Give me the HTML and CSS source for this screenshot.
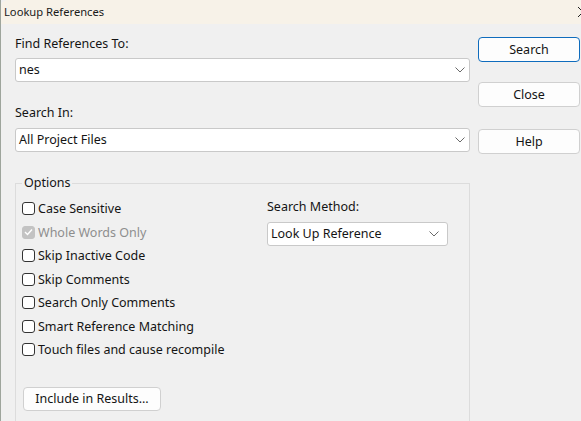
FILE: index.html
```html
<!DOCTYPE html>
<html lang="en">
<head>
<meta charset="utf-8">
<title>Lookup References</title>
<link rel="stylesheet" href="styles.css">
</head>
<body>
<div class="window">
  <div class="titlebar">
    <span class="title">Lookup References</span>
    <svg class="close-x" width="12" height="12" viewBox="0 0 12 12"><path d="M1 1 L11 11 M11 1 L1 11" stroke="#222" stroke-width="1" fill="none"/></svg>
  </div>
  <div class="body">
    <div class="main">
      <div class="lbl lbl-find">Find References To:</div>
      <div class="combo combo-find">
        <span class="combo-text">nes</span>
        <svg class="chev" width="10" height="6" viewBox="0 0 10 6"><path d="M0.5 0.5 L5 5 L9.5 0.5" stroke="#6a6a6a" stroke-width="1" fill="none"/></svg>
      </div>
      <div class="lbl lbl-in">Search In:</div>
      <div class="combo combo-in">
        <span class="combo-text">All Project Files</span>
        <svg class="chev" width="10" height="6" viewBox="0 0 10 6"><path d="M0.5 0.5 L5 5 L9.5 0.5" stroke="#6a6a6a" stroke-width="1" fill="none"/></svg>
      </div>

      <fieldset class="options">
        <legend>Options</legend>
        <div class="opt-cols">
          <ul class="checks">
            <li><span class="box"></span>Case Sensitive</li>
            <li class="disabled"><span class="box checked"><svg width="9" height="8" viewBox="0 0 9 8"><path d="M1 4 L3.5 6.5 L8 1.5" stroke="#fff" stroke-width="1.4" fill="none"/></svg></span>Whole Words Only</li>
            <li><span class="box"></span>Skip Inactive Code</li>
            <li><span class="box"></span>Skip Comments</li>
            <li><span class="box"></span>Search Only Comments</li>
            <li><span class="box"></span>Smart Reference Matching</li>
            <li><span class="box"></span>Touch files and cause recompile</li>
          </ul>
          <div class="method">
            <div class="lbl">Search Method:</div>
            <div class="combo combo-method">
              <span class="combo-text">Look Up Reference</span>
              <svg class="chev" width="10" height="6" viewBox="0 0 10 6"><path d="M0.5 0.5 L5 5 L9.5 0.5" stroke="#6a6a6a" stroke-width="1" fill="none"/></svg>
            </div>
          </div>
        </div>
        <button class="btn btn-include">Include in Results...</button>
      </fieldset>
    </div>

    <div class="side">
      <button class="btn btn-side btn-default">Search</button>
      <button class="btn btn-side btn-close">Close</button>
      <button class="btn btn-side btn-help">Help</button>
    </div>
  </div>
</div>
</body>
</html>
```

FILE: styles.css
```css
* { box-sizing: border-box; }

html, body {
  margin: 0;
  padding: 0;
  width: 581px;
  height: 421px;
  overflow: hidden;
  background: #f0f0f0;
}

body {
  font-family: "Noto Sans", "Liberation Sans", sans-serif;
  font-size: 12.5px;
  color: #141414;
}

.window {
  height: 421px;
  border-left: 1px solid #9ea59c;
  background: #f0f0f0;
}

/* caption bar */
.titlebar {
  height: 24px;
  background: #f7f2e8;
  display: flex;
  align-items: center;
  justify-content: space-between;
  padding-left: 3px;
  border-top-left-radius: 6px;
  overflow: hidden;
}
.title {
  font-size: 11.2px;
  line-height: 16px;
  color: #1a1a1a;
}
.close-x {
  margin-right: -8px;
  flex: none;
}

/* dialog body: fields on the left, command buttons on the right */
.body {
  display: flex;
  gap: 8px;
  padding-left: 14px;
}

.main {
  width: 455px;
  flex: none;
  padding-top: 12px;
}

.lbl {
  line-height: 16px;
  height: 16px;
  white-space: nowrap;
}
.lbl-find { margin-bottom: 6px; }
.lbl-in { margin-top: 23px; margin-bottom: 7px; }

.combo {
  height: 24px;
  background: #fff;
  border: 1px solid #c9c9c9;
  border-radius: 3px;
  display: flex;
  align-items: center;
  justify-content: space-between;
  padding: 0 4px 0 3px;
}
.combo-text { line-height: 16px; }
.chev { flex: none; }

/* options group */
.options {
  margin: 23px 0 0 0;
  padding: 0 0 0 6px;
  border: 1px solid #dcdcdc;
  border-radius: 0;
  height: 260px;
  min-width: 0;
}
.options legend {
  padding: 0 2px;
  margin-left: 0;
  line-height: 16px;
}

.opt-cols {
  display: flex;
  padding-top: 6px;
}

.checks {
  list-style: none;
  margin: 0;
  padding: 0;
  width: 245px;
}
.checks li {
  height: 23.5px;
  display: flex;
  align-items: center;
  white-space: nowrap;
}
.checks li.disabled { color: #8e8e8e; }

.box {
  width: 13px;
  height: 13px;
  border: 1px solid #333;
  border-radius: 3px;
  background: #fff;
  margin-right: 3px;
  flex: none;
  display: flex;
  align-items: center;
  justify-content: center;
}
.box.checked {
  background: #c3c3c3;
  border-color: #c3c3c3;
}

.method {
  padding-top: 2px;
}
.method .lbl { margin-bottom: 7px; }
.combo-method {
  width: 181px;
  padding-right: 8px;
}

/* buttons */
.btn {
  font-family: inherit;
  font-size: 12.5px;
  color: #141414;
  background: #fdfdfd;
  border: 1px solid #d0d0d0;
  border-radius: 4px;
  padding: 0;
  line-height: 16px;
}

.btn-include {
  margin-top: 25px;
  margin-left: 1px;
  width: 138px;
  height: 24px;
}

.side {
  display: flex;
  flex-direction: column;
  width: 102px;
  flex: none;
  padding-top: 13px;
}
.btn-side {
  width: 102px;
  height: 25px;
}
.btn-default {
  border-color: #0f6cbd;
}
.btn-close { margin-top: 20px; }
.btn-help { margin-top: 22px; }
```
